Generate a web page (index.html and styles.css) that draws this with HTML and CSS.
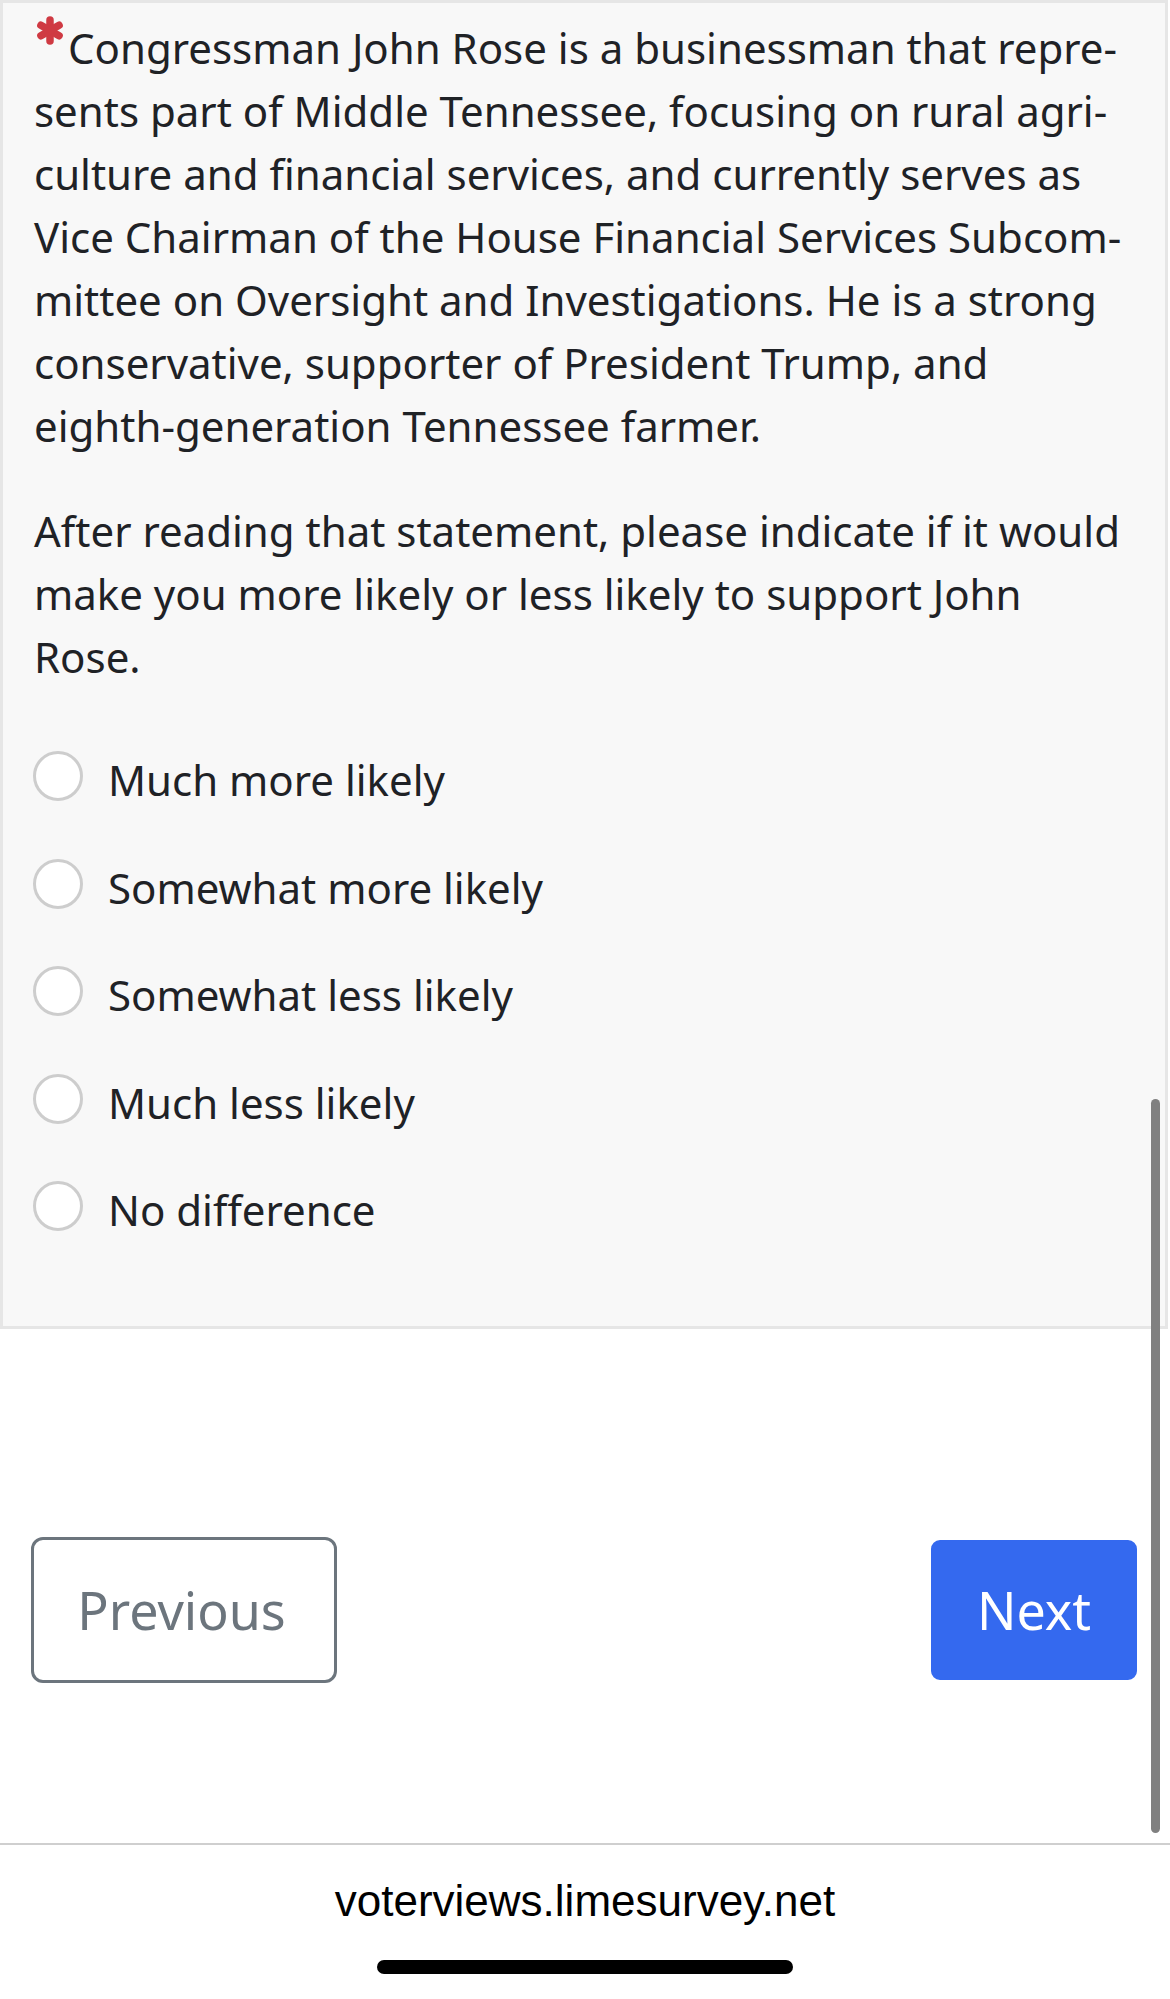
FILE: index.html
```html
<!DOCTYPE html>
<html lang="en">
<head>
    <meta charset="UTF-8">
    <meta name="viewport" content="width=device-width, initial-scale=1.0">
    <title>Survey</title>
    <link rel="stylesheet" href="styles.css">
</head>
<body>
    <div class="question">
        <p class="question-text"><svg class="asterisk" viewBox="0 0 30 29" width="30" height="29"><g stroke="#cf3a43" stroke-width="7.5" stroke-linecap="round"><line x1="15" y1="4" x2="15" y2="25"/><line x1="5.9" y1="9.25" x2="24.1" y2="19.75"/><line x1="5.9" y1="19.75" x2="24.1" y2="9.25"/></g></svg>Congressman John Rose is a businessman that repre&shy;sents part of Middle Tennessee, focusing on rural agri&shy;culture and financial services, and currently serves as Vice Chairman of the House Financial Services Subcom&shy;mittee on Oversight and Investigations. He is a strong conservative, supporter of President Trump, and eighth-generation Tennessee farmer.</p>
        <p class="question-help">After reading that statement, please indicate if it would make you more likely or less likely to support John Rose.</p>
        <ul class="answers">
            <li class="answer"><span class="radio"></span><label>Much more likely</label></li>
            <li class="answer"><span class="radio"></span><label>Somewhat more likely</label></li>
            <li class="answer"><span class="radio"></span><label>Somewhat less likely</label></li>
            <li class="answer"><span class="radio"></span><label>Much less likely</label></li>
            <li class="answer"><span class="radio"></span><label>No difference</label></li>
        </ul>
    </div>
    <div class="navigator">
        <button class="btn-previous">Previous</button>
        <button class="btn-next">Next</button>
    </div>
    <div class="safari-bar">
        <div class="url">voterviews.limesurvey.net</div>
        <div class="home-indicator"></div>
    </div>
    <div class="scrollbar"></div>
</body>
</html>
```

FILE: styles.css
```css
body {
    font-family: "Noto Sans", sans-serif;
    margin: 0;
    background-color: #fff;
    color: #1f2226;
    width: 1170px;
    height: 1999px;
    overflow: hidden;
    display: flex;
    flex-direction: column;
    position: relative;
}
.question {
    width: 1168px;
    box-sizing: border-box;
    background-color: #f8f8f8;
    border: 3px solid #e6e6e6;
    padding: 13px 35px 85px 31px;
    font-size: 42px;
    line-height: 63px;
}
.question p {
    margin: 0 0 42px;
}
.asterisk {
    vertical-align: 19px;
    margin: 0 3px 0 1px;
}
.answers {
    list-style: none;
    margin: 0;
    padding: 18px 0 0;
}
.answer {
    display: flex;
    align-items: flex-start;
    height: 63px;
    margin-bottom: 44.5px;
}
.answer:last-child {
    margin-bottom: 0;
}
.radio {
    width: 50px;
    height: 50px;
    box-sizing: border-box;
    border: 3px solid #cdcdcd;
    border-radius: 50%;
    background-color: #fff;
    margin: 3px 25px 0 -1px;
    flex-shrink: 0;
}
.navigator {
    display: flex;
    justify-content: space-between;
    padding: 0 30px 0 31px;
    margin-top: 208px;
}
.navigator button {
    font-family: "Noto Sans", sans-serif;
    font-size: 52px;
    line-height: 78px;
    padding: 31px 0;
    border: 3px solid;
    border-radius: 12px;
}
.btn-previous {
    background-color: #fff;
    border-color: #6c757d;
    color: #6c757d;
    width: 306px;
    text-indent: -5px;
}
.btn-next {
    background-color: #3469ef;
    border-color: #3469ef;
    color: #fff;
    width: 212px;
}
.safari-bar {
    margin-top: auto;
    height: 156px;
    box-sizing: border-box;
    border-top: 2px solid #cfcfcf;
    padding-top: 30px;
    display: flex;
    flex-direction: column;
    align-items: center;
}
.url {
    font-family: "Liberation Sans", Arial, sans-serif;
    font-size: 44px;
    line-height: 52px;
    color: #000;
}
.home-indicator {
    width: 416px;
    height: 14px;
    border-radius: 7px;
    background-color: #000;
    margin-top: 33px;
}
.scrollbar {
    position: absolute;
    left: 1151px;
    top: 1099px;
    width: 9px;
    height: 734px;
    border-radius: 5px;
    background-color: #808080;
}
```
